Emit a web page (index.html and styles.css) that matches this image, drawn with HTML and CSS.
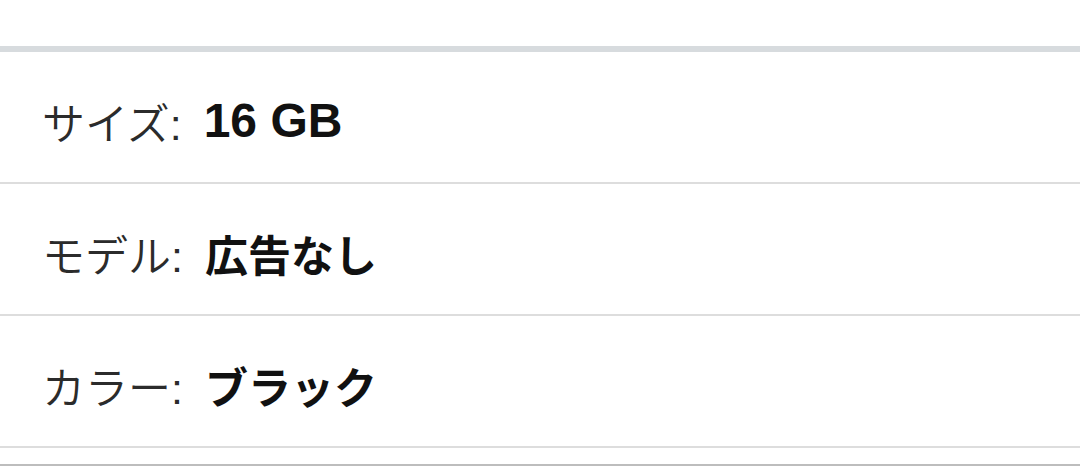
FILE: index.html
```html
<!DOCTYPE html>
<html lang="ja">
<head>
    <meta charset="UTF-8">
    <meta name="viewport" content="width=device-width, initial-scale=1.0">
    <title>商品の詳細</title>
    <link rel="stylesheet" href="styles.css">
</head>
<body>
    <div class="top-gap"></div>

    <ul class="spec-list">
        <li class="spec-row">
            <span class="spec-label">サイズ:</span>
            <span class="spec-value latin">16 GB</span>
        </li>
        <li class="spec-row">
            <span class="spec-label">モデル:</span>
            <span class="spec-value">広告なし</span>
        </li>
        <li class="spec-row">
            <span class="spec-label">カラー:</span>
            <span class="spec-value">ブラック</span>
        </li>
    </ul>

    <div class="bottom-edge"></div>
</body>
</html>
```

FILE: styles.css
```css
body {
    font-family: "Liberation Sans", "Noto Sans CJK JP", sans-serif;
    background: #fff;
    color: #111;
    margin: 0;
    padding: 0;
    overflow: hidden;
}
.top-gap {
    height: 46px;
    border-bottom: 6px solid #d7dbde;
}
.spec-list {
    list-style: none;
    margin: 0;
    padding: 0;
}
/* each row is 130px + 2px rule */
.spec-row {
    height: 132px;
    box-sizing: border-box;
    display: flex;
    align-items: center;
    gap: 22px;
    padding: 7px 42px 0;
    border-bottom: 2px solid #dddddd;
    font-size: 43px;
}
.spec-label {
    color: #2b2b2b;
    font-weight: 350;
}
.spec-value {
    font-weight: bold;
    color: #111;
}
.spec-value.latin {
    font-size: 48px;
}
.bottom-edge {
    margin-top: 16px;
    height: 2px;
    background: #bdbdbd;
}
```
